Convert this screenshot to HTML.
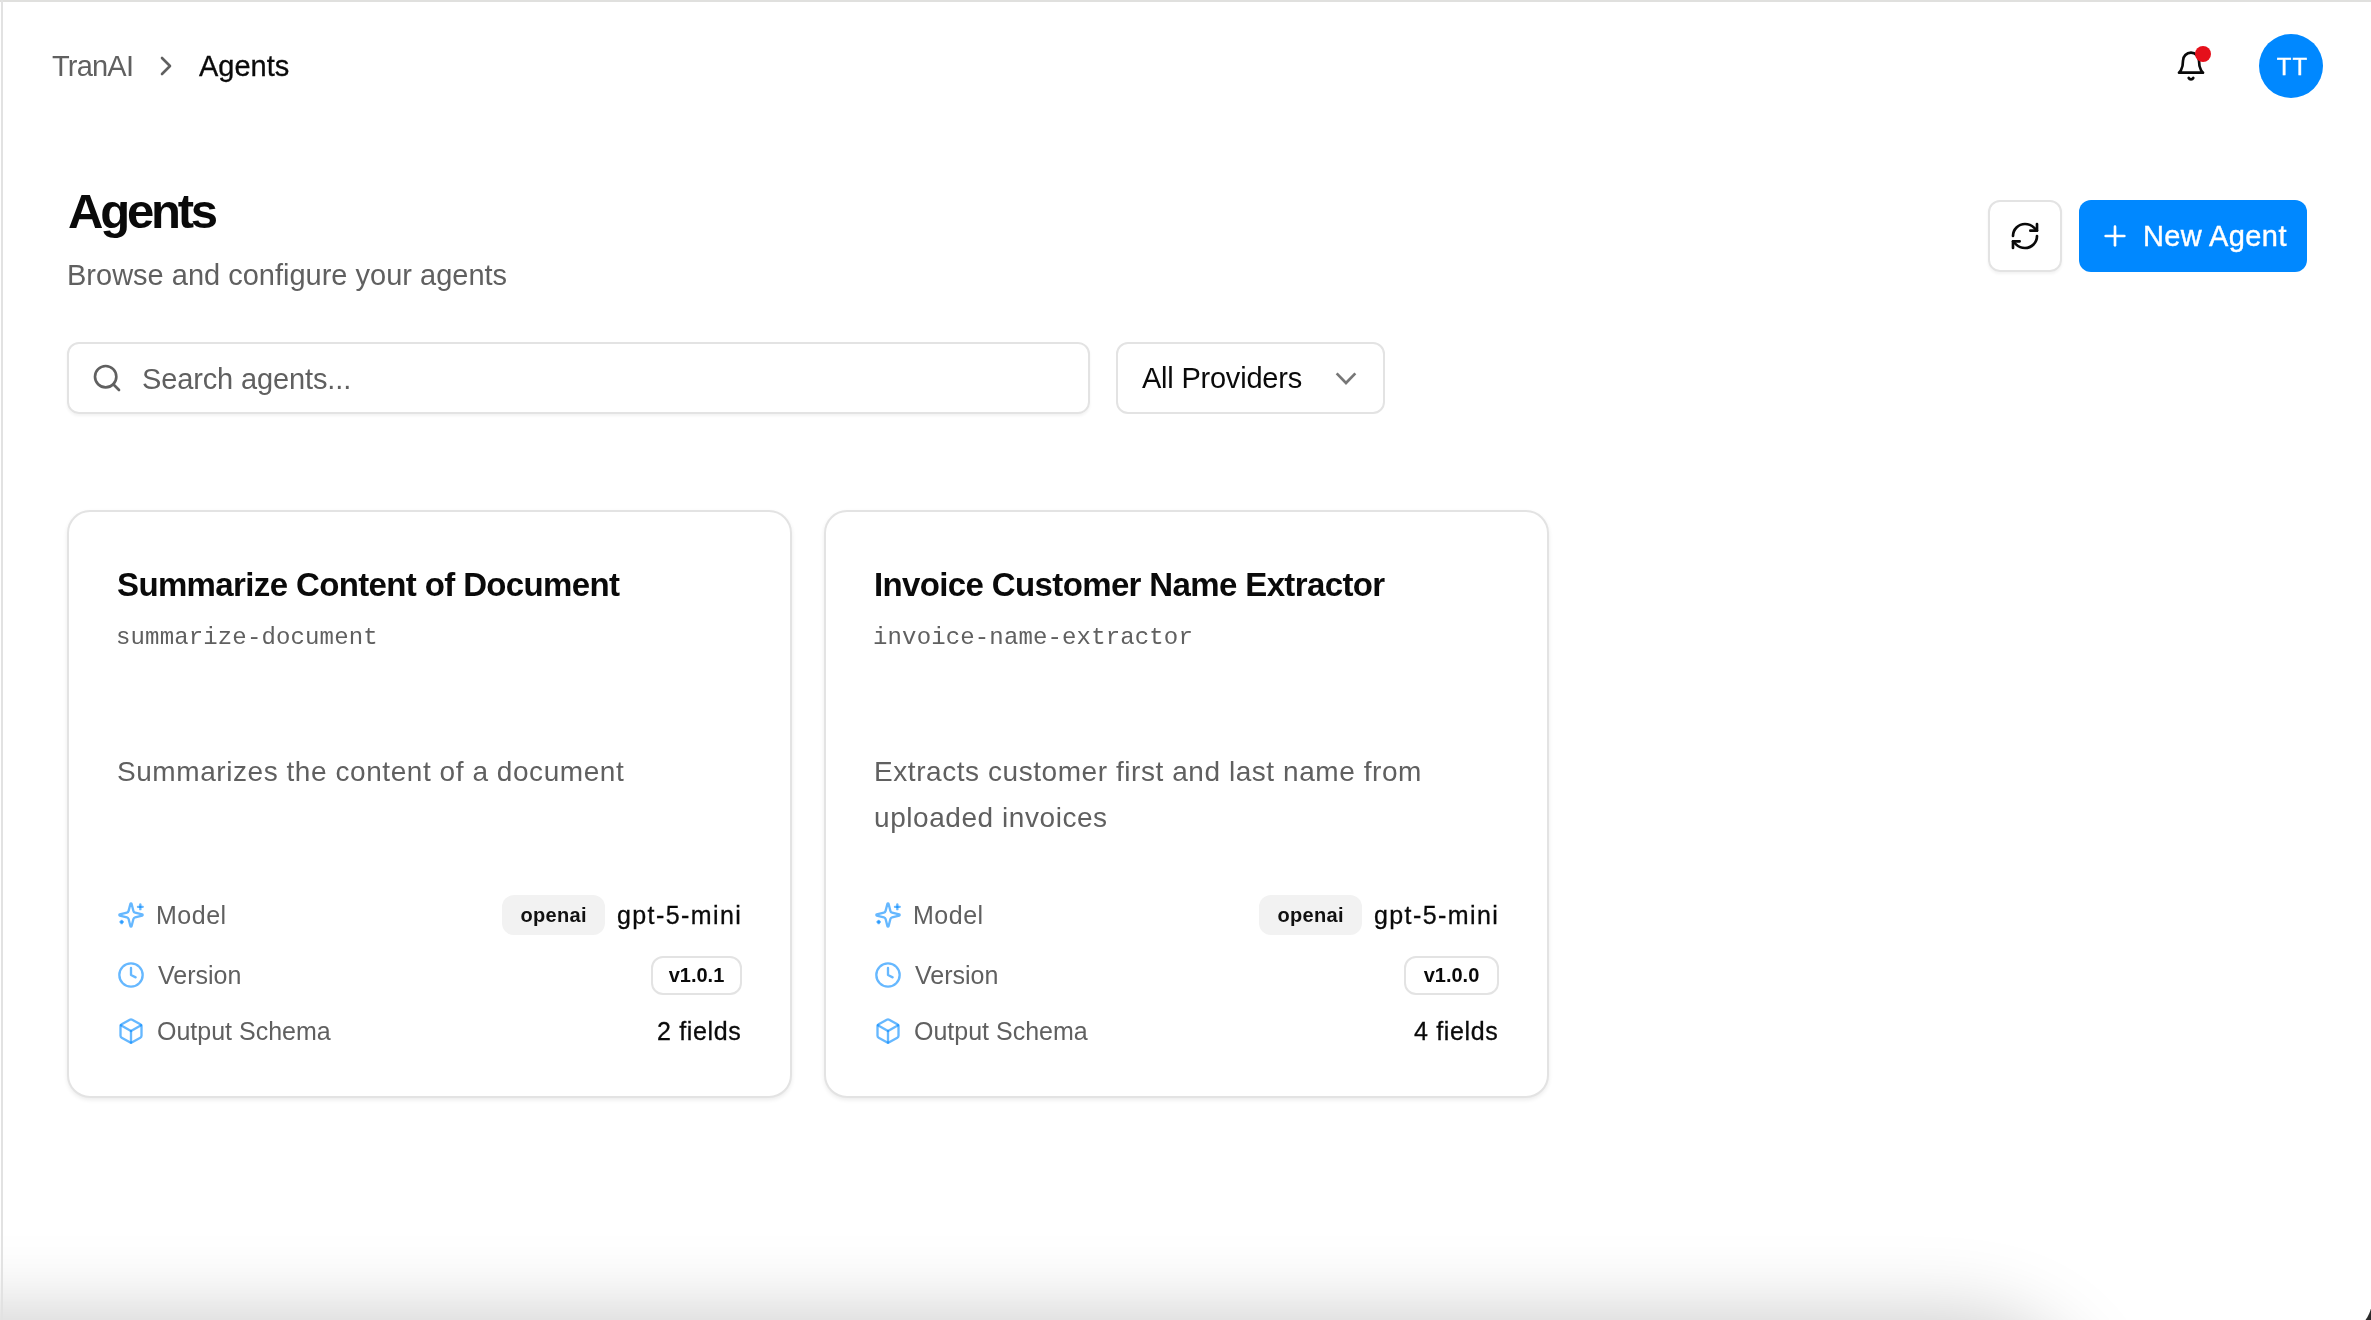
<!DOCTYPE html>
<html><head><meta charset="utf-8">
<style>
*{box-sizing:border-box;margin:0;padding:0}
html,body{width:2371px;height:1320px;overflow:hidden;background:#fff}
body{position:relative;font-family:"Liberation Sans",sans-serif;color:#0a0a0a}
.a{position:absolute;white-space:nowrap;will-change:transform}
.g{color:#606060}
.card{position:absolute;top:510px;width:725px;height:588px;border:2px solid #e3e3e3;border-radius:23px;background:#fff;box-shadow:0 2px 4px rgba(0,0,0,0.08)}
.badge{position:absolute;border-radius:12px}
</style></head>
<body>
<div class="a" style="left:-300px;top:1328px;width:2380px;height:300px;border-radius:120px;box-shadow:0 0 80px 12px rgba(0,0,0,0.21)"></div>
<div class="a" style="left:0;top:0;width:2371px;height:2px;background:#e0e0de"></div>
<div class="a" style="left:2331px;top:1280px;width:40px;height:40px;overflow:hidden;background:#fff"><div style="position:absolute;left:0;top:0;width:80px;height:80px;background:#2b2b2b"></div><div style="position:absolute;left:-39.5px;top:-36px;width:80px;height:90px;border-radius:0 0 34px 0;background:#fff"></div></div>
<div class="a" style="left:1px;top:0;width:2px;height:1320px;background:#e2e2e2"></div>

<div id="t_tranai" class="a g" style="left:52px;top:52px;font-size:29px;line-height:29px;letter-spacing:-0.8px">TranAI</div>
<svg class="a" style="left:152.8px;top:54px" width="24" height="24" viewBox="0 0 24 24" fill="none" stroke="#606060" stroke-width="2.6" stroke-linecap="round" stroke-linejoin="round"><path d="m9 4 8 8-8 8"/></svg>
<div id="t_crumb" class="a" style="left:199px;top:52px;font-size:29px;line-height:29px;-webkit-text-stroke:0.3px #0a0a0a">Agents</div>

<svg class="a" style="left:2175px;top:50px" width="32" height="32" viewBox="0 0 24 24" fill="none" stroke="#0a0a0a" stroke-width="2" stroke-linecap="round" stroke-linejoin="round"><path d="M6 8a6 6 0 0 1 12 0c0 7 3 9 3 9H3s3-2 3-9"/><path d="M10.3 21a1.94 1.94 0 0 0 3.4 0"/></svg>
<div class="a" style="left:2195px;top:46px;width:16px;height:16px;border-radius:50%;background:#e5101b"></div>
<div class="a" style="left:2259px;top:34px;width:64px;height:64px;border-radius:50%;background:#0088ff"></div>
<div id="t_tt" class="a" style="left:2259.5px;top:54.5px;width:64px;text-align:center;color:#fff;font-size:24px;line-height:24px;letter-spacing:1px;text-indent:1px;-webkit-text-stroke:0.4px #fff">TT</div>

<div id="t_h1" class="a" style="left:68px;top:186.8px;font-size:49px;line-height:49px;font-weight:bold;letter-spacing:-3.2px">Agents</div>
<div id="t_sub" class="a g" style="left:67px;top:260.5px;font-size:29px;line-height:29px">Browse and configure your agents</div>

<div class="a" style="left:1988px;top:200px;width:74px;height:72px;border:2px solid #e3e3e3;border-radius:12px;box-shadow:0 2px 3px rgba(0,0,0,0.05)"></div>
<svg class="a" style="left:2009px;top:220px" width="32" height="32" viewBox="0 0 24 24" fill="none" stroke="#0a0a0a" stroke-width="2" stroke-linecap="round" stroke-linejoin="round"><path d="M3 12a9 9 0 0 1 9-9 9.75 9.75 0 0 1 6.74 2.74L21 8"/><path d="M21 3v5h-5"/><path d="M21 12a9 9 0 0 1-9 9 9.75 9.75 0 0 1-6.74-2.74L3 16"/><path d="M8 16H3v5"/></svg>
<div class="a" style="left:2079px;top:200px;width:228px;height:72px;border-radius:12px;background:#0088ff"></div>
<svg class="a" style="left:2099px;top:220px" width="32" height="32" viewBox="0 0 24 24" fill="none" stroke="#fff" stroke-width="2" stroke-linecap="round" stroke-linejoin="round"><path d="M5 12h14"/><path d="M12 5v14"/></svg>
<div id="t_new" class="a" style="left:2143px;top:221.5px;font-size:29px;line-height:29px;color:#fff;letter-spacing:0.4px;-webkit-text-stroke:0.4px #fff">New Agent</div>

<div class="a" style="left:67px;top:342px;width:1023px;height:72px;border:2px solid #e3e3e3;border-radius:12px;box-shadow:0 2px 3px rgba(0,0,0,0.05)"></div>
<svg class="a" style="left:91px;top:362px" width="32" height="32" viewBox="0 0 24 24" fill="none" stroke="#606060" stroke-width="2" stroke-linecap="round" stroke-linejoin="round"><circle cx="11" cy="11" r="8"/><path d="m21 21-4.3-4.3"/></svg>
<div id="t_search" class="a g" style="left:142px;top:364.7px;font-size:29px;line-height:29px;letter-spacing:-0.13px">Search agents...</div>

<div class="a" style="left:1116px;top:342px;width:269px;height:72px;border:2px solid #e3e3e3;border-radius:12px"></div>
<div id="t_all" class="a" style="left:1142px;top:364px;font-size:29px;line-height:29px;letter-spacing:-0.22px">All Providers</div>
<svg class="a" style="left:1330px;top:362.7px" width="32" height="32" viewBox="0 0 24 24" fill="none" stroke="#777" stroke-width="2" stroke-linecap="butt" stroke-linejoin="miter"><path d="m5 7.8 7 7.2 7-7.2"/></svg>

<div class="card" style="left:67px">
  <div id="c1_title" class="a" style="left:48px;top:56px;font-size:33px;line-height:33px;font-weight:bold;letter-spacing:-0.63px">Summarize Content of Document</div>
  <div id="c1_slug" class="a g" style="left:46.7px;top:114px;font-family:'Liberation Mono',monospace;font-size:24px;line-height:24px;letter-spacing:0.14px">summarize-document</div>
  <div id="c1_desc" class="a g" style="left:48px;top:237px;font-size:28px;line-height:46px;letter-spacing:0.56px">Summarizes the content of a document</div>
  <svg class="a" style="left:48px;top:389px" width="28" height="28" viewBox="0 0 24 24" fill="none" stroke="rgba(0,136,255,0.6)" stroke-width="2" stroke-linecap="round" stroke-linejoin="round"><path d="M9.937 15.5A2 2 0 0 0 8.5 14.063l-6.135-1.582a.5.5 0 0 1 0-.962L8.5 9.936A2 2 0 0 0 9.937 8.5l1.582-6.135a.5.5 0 0 1 .963 0L14.063 8.5A2 2 0 0 0 15.5 9.937l6.135 1.581a.5.5 0 0 1 0 .964L15.5 14.063a2 2 0 0 0-1.437 1.437l-1.582 6.135a.5.5 0 0 1-.963 0z"/><path d="M20 3v4"/><path d="M22 5h-4"/><path d="M4 17v2"/><path d="M5 18H3"/></svg>
  <svg class="a" style="left:48px;top:449px" width="28" height="28" viewBox="0 0 24 24" fill="none" stroke="rgba(0,136,255,0.6)" stroke-width="2" stroke-linecap="round" stroke-linejoin="round"><circle cx="12" cy="12" r="10"/><path d="M12 6v6l4 2"/></svg>
  <svg class="a" style="left:48px;top:505px" width="28" height="28" viewBox="0 0 24 24" fill="none" stroke="rgba(0,136,255,0.6)" stroke-width="2" stroke-linecap="round" stroke-linejoin="round"><path d="M21 8a2 2 0 0 0-1-1.73l-7-4a2 2 0 0 0-2 0l-7 4A2 2 0 0 0 3 8v8a2 2 0 0 0 1 1.73l7 4a2 2 0 0 0 2 0l7-4A2 2 0 0 0 21 16Z"/><path d="m3.3 7 8.7 5 8.7-5"/><path d="M12 22V12"/></svg>
  <div id="c1_lm" class="a g" style="left:87px;top:390.8px;font-size:25px;line-height:25px;letter-spacing:0.5px">Model</div>
  <div id="c1_lv" class="a g" style="left:89px;top:450.8px;font-size:25px;line-height:25px">Version</div>
  <div id="c1_lo" class="a g" style="left:88px;top:507px;font-size:25px;line-height:25px">Output Schema</div>
  <div class="badge" style="right:185px;top:383px;width:103px;height:40px;background:#f2f2f2"></div>
  <div id="c1_oa" class="a" style="right:185px;top:393px;width:103px;text-align:center;font-size:20px;line-height:20px;font-weight:bold;letter-spacing:0.3px;text-indent:0.3px;color:#111">openai</div>
  <div id="c1_gpt" class="a" style="right:47.6px;top:391px;font-size:25px;line-height:25px;letter-spacing:1.4px;-webkit-text-stroke:0.3px #0a0a0a">gpt-5-mini</div>
  <div class="badge" style="right:48px;top:444px;width:91px;height:39px;border:2px solid #e3e3e3"></div>
  <div id="c1_ver" class="a" style="right:48px;top:453px;width:91px;text-align:center;font-size:20px;line-height:20px;font-weight:bold">v1.0.1</div>
  <div id="c1_fields" class="a" style="right:48.4px;top:507px;font-size:25px;line-height:25px;letter-spacing:0.64px;-webkit-text-stroke:0.3px #0a0a0a">2 fields</div>
</div>
<div class="card" style="left:824px">
  <div id="c2_title" class="a" style="left:48px;top:56px;font-size:33px;line-height:33px;font-weight:bold;letter-spacing:-0.63px">Invoice Customer Name Extractor</div>
  <div id="c2_slug" class="a g" style="left:46.7px;top:114px;font-family:'Liberation Mono',monospace;font-size:24px;line-height:24px;letter-spacing:0.14px">invoice-name-extractor</div>
  <div id="c2_desc" class="a g" style="left:48px;top:237px;font-size:28px;line-height:46px;letter-spacing:0.56px">Extracts customer first and last name from<br>uploaded invoices</div>
  <svg class="a" style="left:48px;top:389px" width="28" height="28" viewBox="0 0 24 24" fill="none" stroke="rgba(0,136,255,0.6)" stroke-width="2" stroke-linecap="round" stroke-linejoin="round"><path d="M9.937 15.5A2 2 0 0 0 8.5 14.063l-6.135-1.582a.5.5 0 0 1 0-.962L8.5 9.936A2 2 0 0 0 9.937 8.5l1.582-6.135a.5.5 0 0 1 .963 0L14.063 8.5A2 2 0 0 0 15.5 9.937l6.135 1.581a.5.5 0 0 1 0 .964L15.5 14.063a2 2 0 0 0-1.437 1.437l-1.582 6.135a.5.5 0 0 1-.963 0z"/><path d="M20 3v4"/><path d="M22 5h-4"/><path d="M4 17v2"/><path d="M5 18H3"/></svg>
  <svg class="a" style="left:48px;top:449px" width="28" height="28" viewBox="0 0 24 24" fill="none" stroke="rgba(0,136,255,0.6)" stroke-width="2" stroke-linecap="round" stroke-linejoin="round"><circle cx="12" cy="12" r="10"/><path d="M12 6v6l4 2"/></svg>
  <svg class="a" style="left:48px;top:505px" width="28" height="28" viewBox="0 0 24 24" fill="none" stroke="rgba(0,136,255,0.6)" stroke-width="2" stroke-linecap="round" stroke-linejoin="round"><path d="M21 8a2 2 0 0 0-1-1.73l-7-4a2 2 0 0 0-2 0l-7 4A2 2 0 0 0 3 8v8a2 2 0 0 0 1 1.73l7 4a2 2 0 0 0 2 0l7-4A2 2 0 0 0 21 16Z"/><path d="m3.3 7 8.7 5 8.7-5"/><path d="M12 22V12"/></svg>
  <div id="c2_lm" class="a g" style="left:87px;top:390.8px;font-size:25px;line-height:25px;letter-spacing:0.5px">Model</div>
  <div id="c2_lv" class="a g" style="left:89px;top:450.8px;font-size:25px;line-height:25px">Version</div>
  <div id="c2_lo" class="a g" style="left:88px;top:507px;font-size:25px;line-height:25px">Output Schema</div>
  <div class="badge" style="right:185px;top:383px;width:103px;height:40px;background:#f2f2f2"></div>
  <div id="c2_oa" class="a" style="right:185px;top:393px;width:103px;text-align:center;font-size:20px;line-height:20px;font-weight:bold;letter-spacing:0.3px;text-indent:0.3px;color:#111">openai</div>
  <div id="c2_gpt" class="a" style="right:47.6px;top:391px;font-size:25px;line-height:25px;letter-spacing:1.4px;-webkit-text-stroke:0.3px #0a0a0a">gpt-5-mini</div>
  <div class="badge" style="right:48px;top:444px;width:95px;height:39px;border:2px solid #e3e3e3"></div>
  <div id="c2_ver" class="a" style="right:48px;top:453px;width:95px;text-align:center;font-size:20px;line-height:20px;font-weight:bold">v1.0.0</div>
  <div id="c2_fields" class="a" style="right:48.4px;top:507px;font-size:25px;line-height:25px;letter-spacing:0.64px;-webkit-text-stroke:0.3px #0a0a0a">4 fields</div>
</div>
</body></html>
